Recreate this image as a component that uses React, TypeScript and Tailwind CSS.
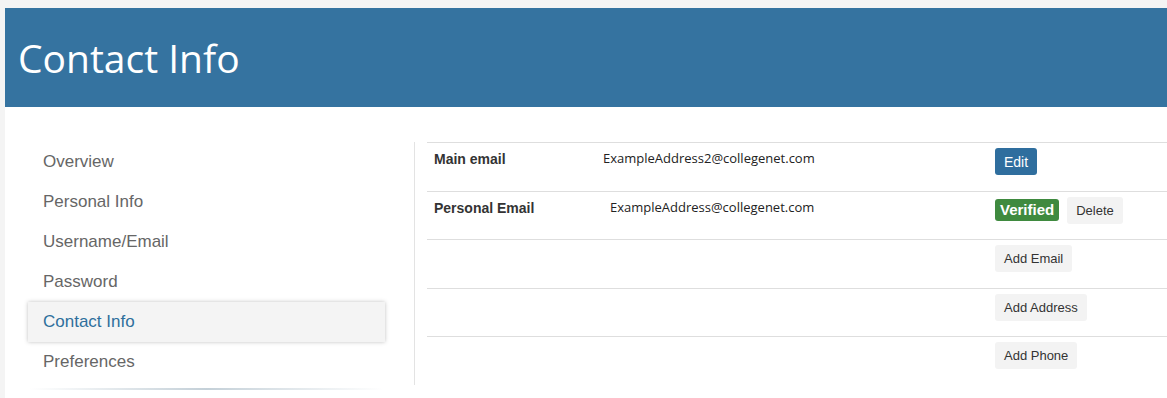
import type { ReactNode } from "react"

const navItems = ["Overview", "Personal Info", "Username/Email", "Password", "Contact Info", "Preferences"]

function GrayButton({ children }: { children: ReactNode }) {
    return (
        <button className="h-[27px] px-[9px] rounded-[3px] bg-[#f3f3f3] text-[#333] text-[13px] leading-none">
            {children}
        </button>
    )
}

function Row({ label, value, valueOffset, children }: { label?: string; value?: string; valueOffset?: string; children: ReactNode }) {
    return (
        <div className="flex items-start h-[48.5px] border-t border-[#dedede]">
            <div className="w-[169px] pl-[7px] pt-[6px] font-bold text-[14px] text-[#333]">{label}</div>
            <div className={`flex-1 pt-[6px] text-[13px] text-[#222] font-['Open_Sans',sans-serif] ${valueOffset ?? ""}`}>{value}</div>
            <div className="w-[172px] pt-[5px] flex items-center gap-2">{children}</div>
        </div>
    )
}

export default function App() {
    return (
        <div className="w-[1167px] h-[398px] bg-[#f4f4f4] pt-[8px] pl-[5px] overflow-hidden font-['Liberation_Sans',Arial,sans-serif]">
            <div className="bg-white h-full">
                {/* Header */}
                <div className="h-[99px] bg-[#3573a0] flex items-center pl-[13px]">
                    <h1 className="text-white text-[39px] font-['Open_Sans',sans-serif] pt-[2px]">Contact Info</h1>
                </div>

                <div className="flex pt-[35px]">
                    {/* Sidebar */}
                    <div className="w-[409px] pl-[23px] pr-[29px]">
                        <ul>
                            {navItems.map((item) => {
                                const active = item === "Contact Info"
                                return (
                                    <li
                                        key={item}
                                        className={`h-[40px] flex items-center pl-[15px] text-[17px] ${active ? "bg-[#f4f4f4] text-[#2e6f9c] shadow-[0_0_4px_rgba(0,0,0,0.25)]" : "text-[#666]"}`}
                                    >
                                        {item}
                                    </li>
                                )
                            })}
                        </ul>
                        <div className="mt-[6px] mx-[2px] h-[2px] bg-gradient-to-r from-transparent via-[#c4d0d8] to-transparent" />
                    </div>

                    {/* Divider */}
                    <div className="w-px bg-[#e3e3e3] h-[243px]" />

                    {/* Table */}
                    <div className="flex-1 pl-[12px]">
                        <Row label="Main email" value="ExampleAddress2@collegenet.com" valueOffset="pl-[7px]">
                            <button className="h-[27px] px-[9px] rounded-[3px] bg-[#2f6e9e] text-white text-[14px] leading-none">Edit</button>
                        </Row>
                        <Row label="Personal Email" value="ExampleAddress@collegenet.com" valueOffset="pl-[14px]">
                            <span className="h-[22px] px-[5px] rounded-[3px] bg-[#3f8a3f] text-white font-bold text-[15px] leading-[22px]">Verified</span>
                            <GrayButton>Delete</GrayButton>
                        </Row>
                        <Row>
                            <GrayButton>Add Email</GrayButton>
                        </Row>
                        <Row>
                            <GrayButton>Add Address</GrayButton>
                        </Row>
                        <Row>
                            <GrayButton>Add Phone</GrayButton>
                        </Row>
                    </div>
                </div>
            </div>
        </div>
    )
}
